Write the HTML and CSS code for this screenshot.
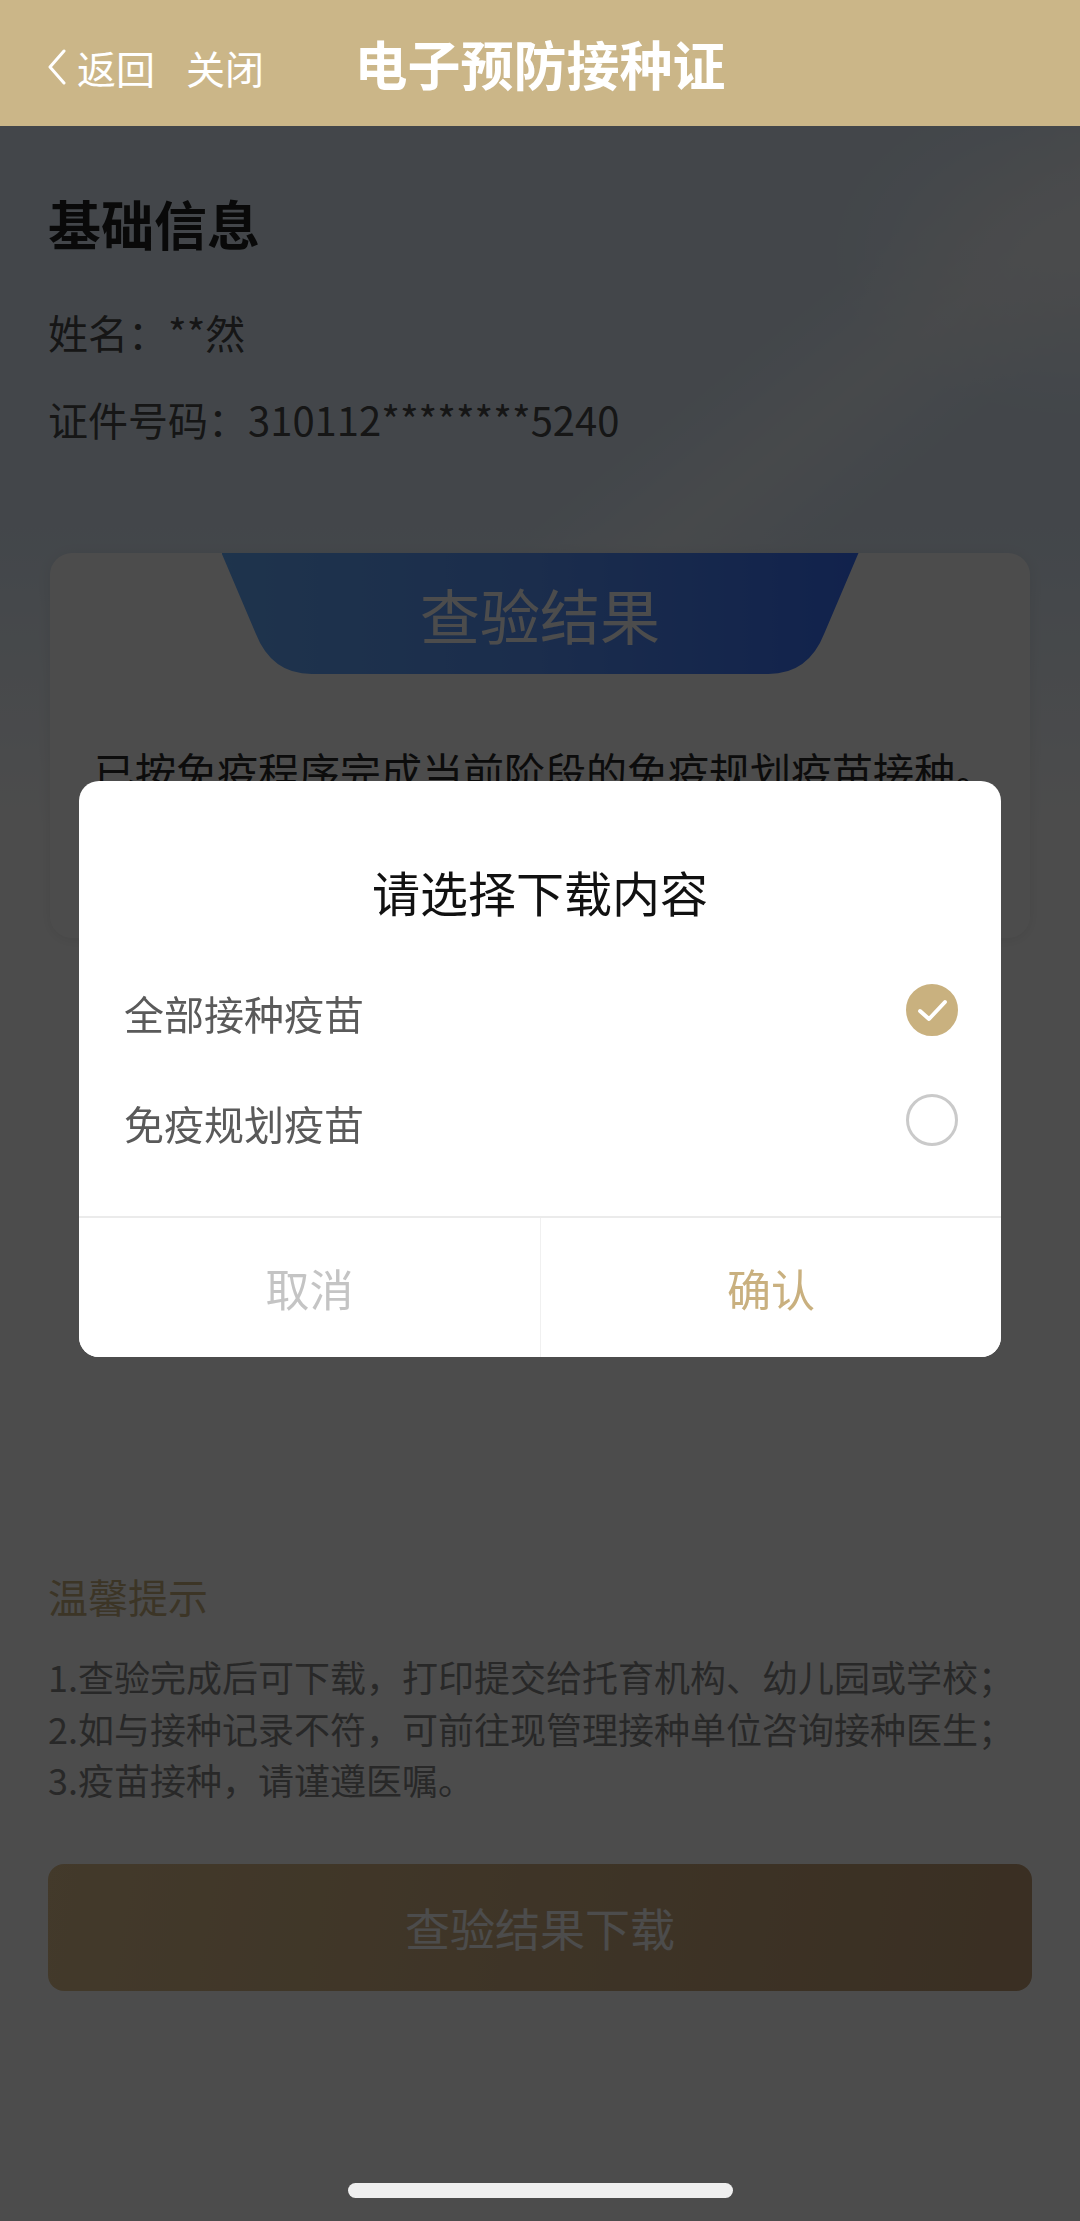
FILE: index.html
```html
<!DOCTYPE html>
<html lang="zh-CN">
<head>
<meta charset="utf-8">
<title>电子预防接种证</title>
<link rel="stylesheet" href="styles.css">
</head>
<body>
<header class="nav">
  <div class="nav-left">
    <span class="back">
      <svg class="back-icon" width="20" height="36" viewBox="0 0 20 36"><polyline points="17,2 3,18 17,34" fill="none" stroke="#fff" stroke-width="3" stroke-linecap="round" stroke-linejoin="round"/></svg>
      <span>返回</span>
    </span>
    <span class="close">关闭</span>
  </div>
  <h1 class="nav-title">电子预防接种证</h1>
  <div class="nav-right"></div>
</header>

<main class="page">
  <section class="basic">
    <h2 class="section-title">基础信息</h2>
    <p class="info-row">姓名：**然</p>
    <p class="info-row">证件号码：310112********5240</p>
  </section>

  <section class="result-card">
    <div class="result-tab">查验结果</div>
    <p class="result-text">已按免疫程序完成当前阶段的免疫规划疫苗接种。</p>
  </section>

  <section class="tips">
    <h3 class="tips-title">温馨提示</h3>
    <ol class="tips-list">
      <li>1.查验完成后可下载，打印提交给托育机构、幼儿园或学校；</li>
      <li>2.如与接种记录不符，可前往现管理接种单位咨询接种医生；</li>
      <li>3.疫苗接种，请谨遵医嘱。</li>
    </ol>
  </section>

  <button class="download-btn" type="button">查验结果下载</button>
</main>

<div class="mask">
  <div class="dialog">
    <h2 class="dialog-title">请选择下载内容</h2>
    <div class="options">
      <div class="option">
        <span>全部接种疫苗</span>
        <span class="radio checked"><svg width="46" height="46" viewBox="0 0 46 46"><polyline points="11,24 20,32 36,15" fill="none" stroke="#fff" stroke-width="4" stroke-linecap="round" stroke-linejoin="round"/></svg></span>
      </div>
      <div class="option">
        <span>免疫规划疫苗</span>
        <span class="radio"></span>
      </div>
    </div>
    <div class="dialog-actions">
      <button class="action cancel" type="button">取消</button>
      <button class="action confirm" type="button">确认</button>
    </div>
  </div>
</div>

<div class="home-indicator"></div>
</body>
</html>
```

FILE: styles.css
```css
html, body {
  margin: 0;
  padding: 0;
}

body {
  width: 1080px;
  height: 2221px;
  overflow: hidden;
  background: #ffffff;
  font-family: "Noto Sans CJK SC", "Noto Sans", sans-serif;
}

/* ---------- navigation bar ---------- */
.nav {
  height: 126px;
  background: #cbb688;
  color: #ffffff;
  display: grid;
  grid-template-columns: 1fr auto 1fr;
  align-items: center;
}

.nav-left {
  display: flex;
  align-items: center;
  padding-left: 47px;
  padding-top: 8px;
  font-size: 39px;
  line-height: 50px;
}

.back {
  display: flex;
  align-items: center;
  gap: 10px;
}

.back-icon {
  display: block;
}

.close {
  margin-left: 31px;
}

.nav-title {
  margin: 0;
  font-size: 53px;
  line-height: 70px;
  font-weight: 700;
}

/* ---------- page ---------- */
.page {
  box-sizing: border-box;
  min-height: 2095px;
  padding: 61px 48px 0;
  background:
    radial-gradient(ellipse 360px 240px at 100% 6%, rgba(255, 255, 255, 0.75), rgba(255, 255, 255, 0) 70%),
    linear-gradient(141deg, rgba(255,255,255,0) 52%, rgba(255,255,255,0.45) 60%, rgba(255,255,255,0) 68%) no-repeat 0 0 / 100% 720px,
    linear-gradient(180deg, #dfecf9 0, #dfecf9 400px, #ffffff 700px, #ffffff 100%);
}

.section-title {
  margin: 0;
  font-size: 53px;
  line-height: 72px;
  font-weight: 700;
  color: #1e1e1e;
}

.info-row {
  margin: 43px 0 0;
  font-size: 40px;
  line-height: 60px;
  color: #4a4a4a;
}

.info-row + .info-row {
  margin-top: 27px;
}

/* ---------- result card ---------- */
.result-card {
  margin: 104px 2px 0;
  padding-bottom: 138px;
  background: #ffffff;
  border-radius: 22px;
  box-shadow: 0 2px 14px rgba(0, 0, 0, 0.08);
}

.result-tab {
  width: 637px;
  height: 121px;
  margin: 0 auto;
  clip-path: path('M0 0 H637 L603 80 Q587 121 547 121 H90 Q50 121 34 80 Z');
  background: linear-gradient(90deg, #67adfd 0%, #5a96ff 50%, #3a72ff 100%);
  color: #ffffff;
  font-size: 60px;
  line-height: 1;
  display: flex;
  align-items: center;
  justify-content: center;
}

.result-text {
  margin: 66px 0 0;
  padding-left: 44px;
  font-size: 41px;
  line-height: 60px;
  color: #2a2a2a;
  white-space: nowrap;
}

/* ---------- tips ---------- */
.tips {
  margin-top: 630px;
}

.tips-title {
  margin: 0;
  font-size: 40px;
  line-height: 56px;
  font-weight: 400;
  color: #c9b17f;
}

.tips-list {
  margin: 27px 0 0;
  padding: 0;
  list-style: none;
  font-size: 36px;
  line-height: 51.5px;
  color: #888888;
}

.download-btn {
  display: block;
  width: 100%;
  height: 127px;
  margin-top: 58px;
  border: none;
  border-radius: 16px;
  background: linear-gradient(100deg, #dfc18f 0%, #c19d75 100%);
  color: #ffffff;
  font-family: inherit;
  font-size: 45px;
}

/* ---------- dialog ---------- */
.mask {
  position: fixed;
  top: 126px;
  left: 0;
  right: 0;
  bottom: 0;
  box-sizing: border-box;
  padding-top: 655px;
  background: rgba(0, 0, 0, 0.7);
  display: flex;
  justify-content: center;
  align-items: flex-start;
}

.dialog {
  width: 922px;
  background: #ffffff;
  border-radius: 20px;
  overflow: hidden;
}

.dialog-title {
  margin: 0;
  padding-top: 78px;
  font-size: 48px;
  line-height: 64px;
  font-weight: 400;
  text-align: center;
  color: #111111;
}

.options {
  margin-top: 35px;
  padding: 0 43px 38px 45px;
}

.option {
  height: 110px;
  display: flex;
  align-items: center;
  justify-content: space-between;
  font-size: 40px;
  color: #5a5a5a;
}

.radio {
  box-sizing: border-box;
  width: 52px;
  height: 52px;
  border-radius: 50%;
  border: 3px solid #cacaca;
  display: flex;
  align-items: center;
  justify-content: center;
  margin-top: -6px;
}

.radio.checked {
  background: #c9b17f;
  border-color: #c9b17f;
}

.radio svg {
  display: block;
}

.dialog-actions {
  height: 139px;
  border-top: 2px solid #ebebeb;
  display: grid;
  grid-template-columns: 1fr 1fr;
}

.action {
  border: none;
  background: #ffffff;
  font-family: inherit;
  font-size: 44px;
  color: #c4c4c4;
}

.action.confirm {
  border-left: 1px solid #f0f0f0;
  color: #c9b07f;
}

/* ---------- system home indicator ---------- */
.home-indicator {
  position: fixed;
  left: 0;
  right: 0;
  bottom: 23px;
  width: 385px;
  height: 15px;
  margin: 0 auto;
  border-radius: 8px;
  background: #efefef;
}
```
